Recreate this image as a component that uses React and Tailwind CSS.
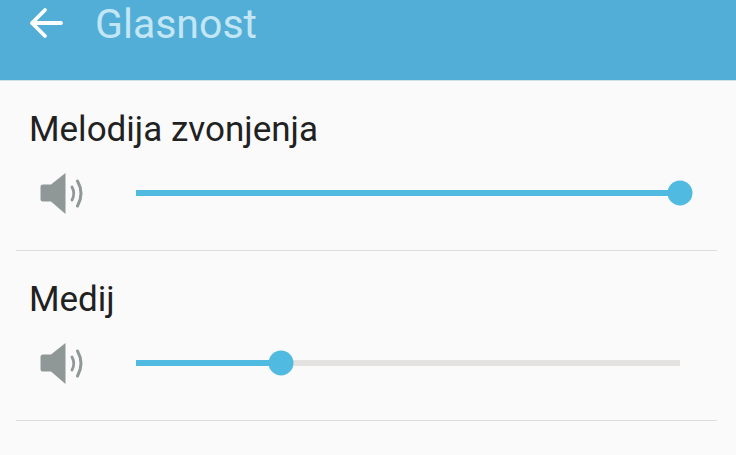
const VolumeIcon = () => (
  <svg width="46" height="44" viewBox="0 0 46 44" className="shrink-0">
    <path d="M12 13.5 L26.5 2 V43 L12 30.5 H4 Q1.5 30.5 1.5 28 V16 Q1.5 13.5 4 13.5 Z" fill="#8f9797" />
    <path d="M33 16 Q36.5 22.5 33 29" fill="none" stroke="#8f9797" strokeWidth="2.8" strokeLinecap="round" />
    <path d="M38.5 10 Q45.5 22.5 38.5 35" fill="none" stroke="#8f9797" strokeWidth="3" strokeLinecap="round" />
  </svg>
);

const VolumeRow = ({ label, value }) => (
  <div className="h-[170px] w-[701px] ml-4 border-b border-[#dcdcdc] pl-[13px]">
    <div className="pt-[28px] text-[35px] leading-[42px] text-[#212121]">{label}</div>
    <div className="flex items-center mt-[20px] h-[44px]">
      <div className="ml-[10px]"><VolumeIcon /></div>
      <div className="relative ml-[51px] w-[544px] h-[6px] bg-[#e4e2e0]">
        <div className="h-full bg-[#50bae1]" style={{ width: `${value}%` }} />
        <div
          className="absolute top-1/2 w-[25px] h-[25px] -translate-x-1/2 -translate-y-1/2 rounded-full bg-[#50bae1]"
          style={{ left: `${value}%` }}
        />
      </div>
    </div>
  </div>
);

export default function App() {
  return (
    <div className="w-[736px] h-[455px] overflow-hidden bg-[#fafafa] font-['Roboto',sans-serif]">
      <div className="h-[81px] bg-[#52aed6] border-b border-[#cfe0e6] flex items-start pl-[29px]">
        <svg width="34" height="34" viewBox="0 0 34 34" className="mt-[6px] shrink-0">
          <path d="M32 17 H3 M16 4 L3 17 L16 30" fill="none" stroke="#fff" strokeWidth="3.8" strokeLinecap="round" strokeLinejoin="round" />
        </svg>
        <div className="ml-[32px] mt-[2px] text-[41px] leading-[44px] text-[#c3e6f5]">Glasnost</div>
      </div>
      <VolumeRow label="Melodija zvonjenja" value={100} />
      <VolumeRow label="Medij" value={26.7} />
    </div>
  );
}
